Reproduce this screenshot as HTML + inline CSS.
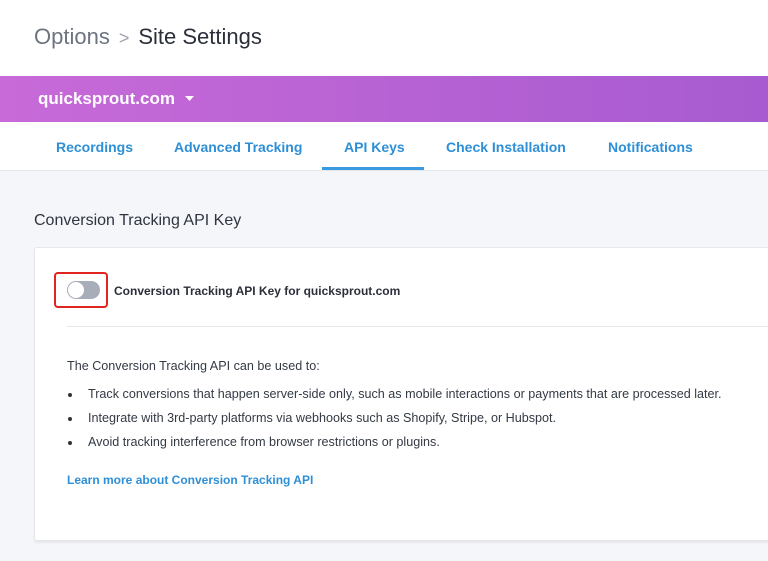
<!DOCTYPE html>
<html><head><style>
*{margin:0;padding:0;box-sizing:border-box}
body{width:768px;height:561px;overflow:hidden;background:#f5f6f9;font-family:"Liberation Sans",sans-serif;position:relative}
.top{position:absolute;left:0;top:0;width:768px;height:76px;background:#fff}
.bc{position:absolute;left:34px;top:24px;font-size:22px;color:#2a2f3a}
.bc .o{color:#6d7480}
.bc .s{color:#a0a5ad;margin:0 9px;font-size:18px}
.bar{position:absolute;left:0;top:76px;width:768px;height:46px;background:linear-gradient(90deg,#c86ad8,#a75bd0)}
.bar span{position:absolute;left:38px;top:13px;color:#fff;font-size:17px;font-weight:bold}
.tabs{position:absolute;left:0;top:122px;width:768px;height:49px;background:#fff;border-bottom:1px solid #e3e6eb}
.tab{position:absolute;top:17px;font-size:14px;font-weight:bold;color:#2e8fd6}
.ul{position:absolute;left:322px;top:45px;width:102px;height:3px;background:#3a9ae0}
h2{position:absolute;left:34px;top:212px;font-size:16px;font-weight:normal;color:#2f3440}
.card{position:absolute;left:34px;top:247px;width:760px;height:294px;background:#fff;border:1px solid #e4e7ec;border-radius:3px;box-shadow:0 2px 2px rgba(0,0,0,.06)}
.red{position:absolute;left:54px;top:272px;width:54px;height:36px;border:2px solid #e0241f;border-radius:4px}
.trk{position:absolute;left:67px;top:281px;width:33px;height:18px;border-radius:9px;background:#a8adba}
.knob{position:absolute;left:68px;top:282px;width:16px;height:16px;border-radius:50%;background:#fff}
.lbl{position:absolute;left:114px;top:284px;font-size:12px;font-weight:bold;color:#2a2f3a}
.hr{position:absolute;left:67px;top:326px;width:701px;height:1px;background:#e3e6eb}
.t{position:absolute;font-size:12.6px;color:#333a44;white-space:nowrap}
.b{position:absolute;left:68px;width:4px;height:4px;border-radius:50%;background:#333}
.lnk{position:absolute;left:67px;top:473px;font-size:12px;font-weight:bold;color:#2e8fd6}
</style></head><body>
<div class="top"><div class="bc"><span class="o">Options</span><span class="s">&gt;</span>Site Settings</div></div>
<div class="bar"><span>quicksprout.com</span></div>
<svg style="position:absolute;left:185px;top:96px" width="9" height="6"><path d="M0 0H9L4.5 5Z" fill="#fff"/></svg>
<div class="tabs">
<div class="tab" style="left:56px">Recordings</div>
<div class="tab" style="left:174px">Advanced Tracking</div>
<div class="tab" style="left:344px">API Keys</div>
<div class="tab" style="left:446px">Check Installation</div>
<div class="tab" style="left:608px">Notifications</div>
<div class="ul"></div>
</div>
<h2>Conversion Tracking API Key</h2>
<div class="card"></div>
<div class="red"></div><div class="trk"></div><div class="knob"></div>
<div class="lbl">Conversion Tracking API Key for quicksprout.com</div>
<div class="hr"></div>
<div class="t" style="left:67px;top:359px">The Conversion Tracking API can be used to:</div>
<div class="b" style="top:393px"></div><div class="t" style="left:88px;top:387px">Track conversions that happen server-side only, such as mobile interactions or payments that are processed later.</div>
<div class="b" style="top:417px"></div><div class="t" style="left:88px;top:411px">Integrate with 3rd-party platforms via webhooks such as Shopify, Stripe, or Hubspot.</div>
<div class="b" style="top:441px"></div><div class="t" style="left:88px;top:435px">Avoid tracking interference from browser restrictions or plugins.</div>
<div class="lnk">Learn more about Conversion Tracking API</div>
</body></html>
